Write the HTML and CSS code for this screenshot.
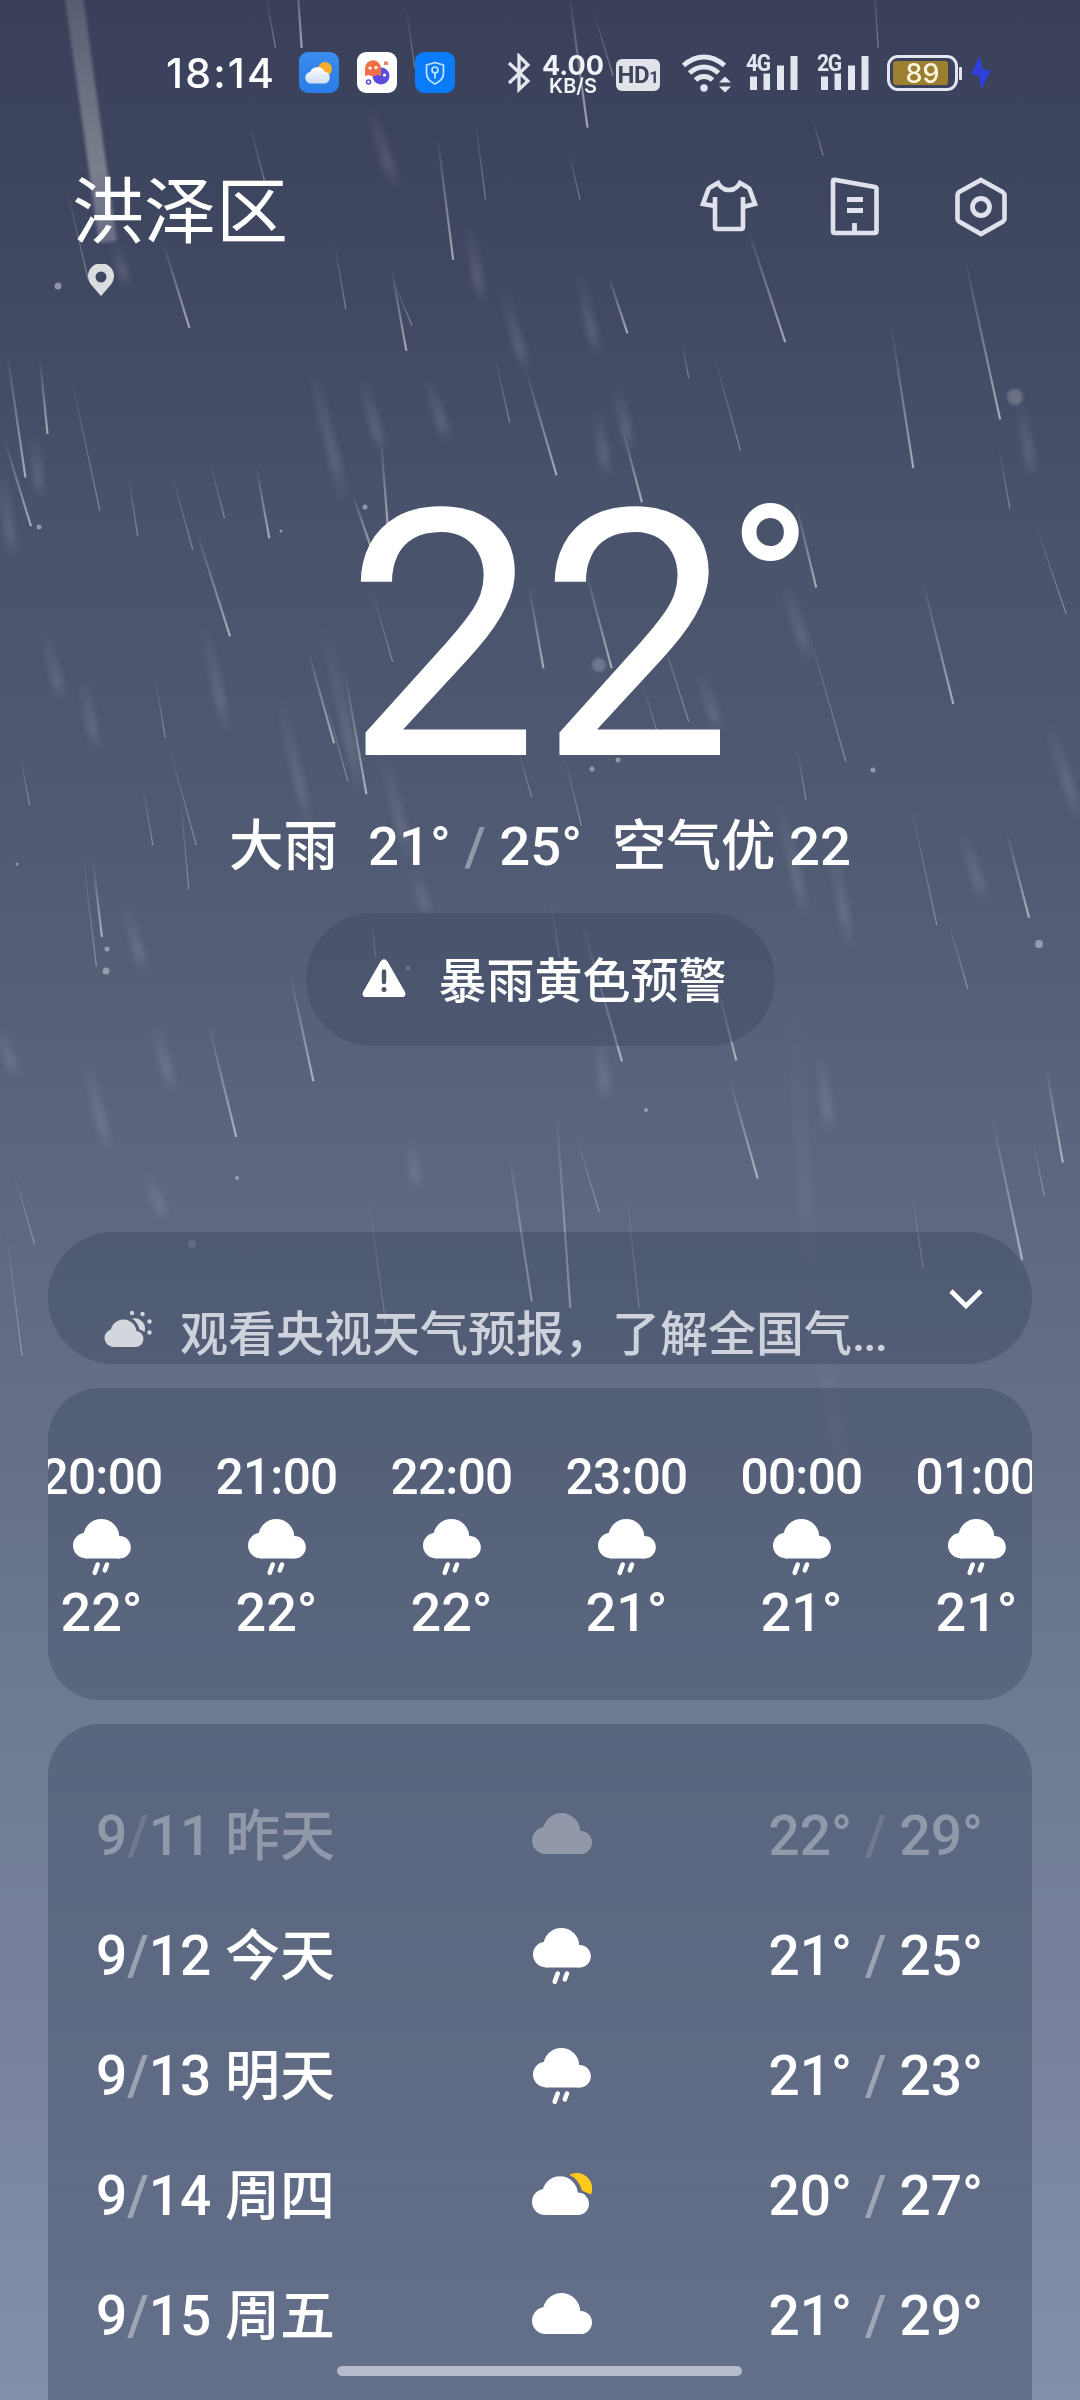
FILE: index.html
```html
<!DOCTYPE html>
<html lang="zh-CN">
<head>
<meta charset="utf-8">
<title>天气</title>
<link rel="stylesheet" href="styles.css">
</head>
<body>
<svg class="defs" width="0" height="0" aria-hidden="true">
  <defs>
    <linearGradient id="fade" x1="0" y1="0" x2="0" y2="1"><stop offset="0" stop-color="#dfe2e6" stop-opacity="0"/><stop offset="1" stop-color="#dfe2e6"/></linearGradient>
    <linearGradient id="mist" x1="0" y1="0" x2="0" y2="1"><stop offset="0" stop-color="#cdcfd8" stop-opacity="0"/><stop offset=".7" stop-color="#cdcfd8"/><stop offset="1" stop-color="#cdcfd8" stop-opacity="0"/></linearGradient>
    <linearGradient id="streak" x1="0" y1="0" x2="0" y2="1"><stop offset="0" stop-color="#a9b0b4" stop-opacity=".25"/><stop offset=".7" stop-color="#a9b0b4" stop-opacity=".55"/><stop offset="1" stop-color="#a9a9c0" stop-opacity=".4"/></linearGradient>
    <linearGradient id="skyIcon" x1="0" y1="0" x2="0" y2="1"><stop offset="0" stop-color="#3a8cf0"/><stop offset="1" stop-color="#2a7de6"/></linearGradient>
    <linearGradient id="cloudIcon" x1="0" y1="0" x2="0" y2="1"><stop offset="0" stop-color="#fff"/><stop offset="1" stop-color="#cfdcf0"/></linearGradient>
    <filter id="soft" x="-20%" width="140%"><feGaussianBlur stdDeviation="4"/></filter>
    <filter id="softer" x="-50%" width="200%"><feGaussianBlur stdDeviation="1.500"/></filter>
    <symbol id="cloud" viewBox="0 0 60 41"><circle cx="29.5" cy="18.7" r="18.7"/><circle cx="13.5" cy="27.5" r="13.5"/><circle cx="48.5" cy="29.5" r="11.5"/><path d="M13 24H49V41H13Z"/></symbol>
    <symbol id="rain" viewBox="0 0 58 58"><circle cx="28.3" cy="18" r="18"/><circle cx="12.8" cy="26.5" r="12.8"/><circle cx="46.5" cy="28.2" r="11.3"/><path d="M12 22H47V39.5H12Z"/><path d="M24.7 45.500L21.700 53.8M34 45.500L31.8 51.3" fill="none" stroke="#fff" stroke-width="4.6" stroke-linecap="round"/></symbol>
    <symbol id="partly" viewBox="0 0 60 44"><g fill="#fff"><circle cx="28" cy="23" r="17.8"/><circle cx="13" cy="31" r="13"/><circle cx="45.8" cy="32.8" r="11.2"/><path d="M13 26H46V44H13Z"/></g><path fill="#ffca1c" d="M37.3 3.8A15.5 15.5 0 0 1 59 23.5Q53 21.3 50 19.6Q47 8.5 37.3 3.8Z"/></symbol>
    <symbol id="bars" viewBox="0 0 52 36"><path d="M4 21.5h7V35H4zM17.500 18.500H24V35h-6.500zM31 10.500h7V35h-7zM44.500 1H51.500V35H44.500z"/></symbol>
  </defs>
</svg>

<svg class="rain" viewBox="0 0 1080 2400" aria-hidden="true">
  <path class="streak" d="M73 -10L108 242"/>
  <g transform="scale(.6888 .7974)">
    <g class="glow">
      <path d="M165 300L185 360"/>
      <path d="M535 130L575 235"/><path d="M680 280L700 382"/><path d="M450 450L500 630"/><path d="M525 470L555 570"/><path d="M620 470L650 555"/><path d="M730 360L765 470"/><path d="M840 340L868 450"/>
      <path d="M0 590L20 700"/><path d="M50 545L58 625"/><path d="M65 790L90 880"/><path d="M295 780L330 920"/><path d="M120 850L140 940"/><path d="M405 870L450 1040"/><path d="M470 780L525 1000"/><path d="M555 940L595 1080"/>
      <path d="M865 510L882 600"/><path d="M895 480L915 565"/><path d="M1480 500L1500 600"/><path d="M1140 730L1175 830"/><path d="M1015 840L1045 920"/><path d="M1130 1000L1170 1150"/><path d="M1205 1050L1235 1190"/>
      <path d="M1520 900L1568 1030"/><path d="M180 1130L210 1220"/><path d="M125 1330L158 1445"/><path d="M225 1280L250 1370"/><path d="M600 1090L622 1150"/><path d="M1395 1040L1430 1130"/><path d="M1190 1320L1205 1420"/><path d="M0 1290L22 1350"/><path d="M595 1430L605 1490"/><path d="M870 1300L880 1380"/><path d="M215 1470L238 1530"/>
    </g>
    <g class="veil"><path d="M1150 1230L1175 1600"/><path d="M1170 1580L1235 1890"/></g>
    <g class="bright">
      <path d="M430 -40L438 60"/><path d="M826 -10L853 160"/><path d="M635 170L658 326"/><path d="M237 305L275 411"/><path d="M568 335L590 440"/><path d="M762 460L808 596"/><path d="M1085 285L1140 429"/><path d="M1400 320L1452 526"/><path d="M1294 410L1326 587"/>
      <path d="M10 440L37 599"/><path d="M58 450L69 544"/><path d="M6 550L45 660"/><path d="M372 585L391 675"/><path d="M285 665L334 798"/><path d="M553 550L563 660"/><path d="M512 620L540 690"/><path d="M447 815L485 932"/><path d="M500 840L532 996"/><path d="M903 535L932 630"/><path d="M883 345L911 418"/>
      <path d="M1155 630L1185 737"/><path d="M1340 730L1384 883"/><path d="M850 715L888 838"/><path d="M768 735L789 838"/><path d="M421 1220L455 1356"/><path d="M303 1285L343 1426"/><path d="M844 1155L903 1331"/><path d="M1042 1240L1069 1330"/><path d="M1058 1350L1100 1478"/><path d="M1462 1045L1494 1151"/><path d="M1518 1335L1543 1458"/><path d="M1440 1400L1484 1580"/>
      <path d="M740 1450L772 1632"/><path d="M808 1395L828 1640"/><path d="M135 1080L148 1175"/>
    </g>
    <g class="thin">
      <path d="M860 10L890 95"/><path d="M362 155L385 230"/><path d="M590 10L602 85"/><path d="M690 150L705 250"/><path d="M485 300L502 388"/><path d="M100 460L145 640"/><path d="M826 190L842 250"/><path d="M570 350L598 408"/><path d="M990 430L1000 474"/><path d="M1180 150L1195 195"/><path d="M1268 -30L1275 60"/><path d="M1035 440L1075 565"/><path d="M718 445L740 530"/><path d="M185 590L200 672"/><path d="M248 590L280 690"/><path d="M305 580L326 650"/><path d="M225 850L240 925"/><path d="M245 935L285 1060"/><path d="M207 985L222 1060"/><path d="M262 1000L274 1115"/><path d="M120 1070L140 1212"/>
      <path d="M1450 560L1466 638"/><path d="M1170 780L1228 955"/><path d="M1500 650L1548 770"/><path d="M1158 940L1170 1003"/><path d="M950 770L1000 905"/><path d="M820 950L844 1035"/><path d="M1320 1000L1360 1160"/><path d="M1375 1150L1405 1240"/><path d="M540 1155L545 1200"/><path d="M800 1130L812 1200"/><path d="M1500 1430L1516 1500"/><path d="M1325 1500L1340 1590"/><path d="M835 1420L870 1520"/><path d="M535 1500L560 1660"/><path d="M910 1500L928 1640"/><path d="M8 1535L32 1700"/><path d="M20 1470L50 1560"/><path d="M95 230L128 350"/><path d="M30 950L43 1010"/><path d="M930 850L962 940"/>
      <path d="M470 870L505 980"/><path d="M540 740L570 830"/><path d="M752 940L772 1000"/><path d="M385 -10L400 60"/>
    </g>
  </g>
  <g class="spots"><circle cx="1015" cy="397" r="8" opacity=".5" filter="url(#softer)"/><circle cx="599" cy="665" r="7" opacity=".5" filter="url(#softer)"/><circle cx="1039" cy="944" r="4"/><circle cx="58" cy="286" r="3.500"/><circle cx="39" cy="527" r="2.500"/><circle cx="365" cy="507" r="2.500"/><circle cx="592" cy="769" r="2.500"/><circle cx="618" cy="760" r="2.500"/><circle cx="873" cy="770" r="2.500"/><circle cx="106" cy="971" r="3.500"/><circle cx="107" cy="949" r="2.500"/><circle cx="646" cy="1110" r="2"/><circle cx="237" cy="1178" r="2"/><circle cx="281" cy="531" r="1.500"/><circle cx="408" cy="968" r="2"/><circle cx="192" cy="1244" r="4" opacity=".4"/><circle cx="17" cy="864" r="1.500"/></g>
</svg>

<div class="screen">
  <header class="status">
    <span class="clock">18:14</span>
    <div class="apps">
      <svg width="40" height="41" viewBox="0 0 40 41"><rect width="40" height="41" rx="9" fill="url(#skyIcon)"/><circle cx="26" cy="17" r="7" fill="#f5ae2c"/><g fill="url(#cloudIcon)"><path d="M12 31.500A5.800 5.800 0 0 1 11 20A8 8 0 0 1 25.500 19.500A6.200 6.200 0 0 1 26.500 31.500Z"/></g></svg>
      <svg width="40" height="41" viewBox="0 0 40 41"><rect width="40" height="41" rx="9" fill="#fff"/><circle cx="24" cy="24" r="8.500" fill="#5b4be0"/><path d="M8 24V16.500A8 8 0 0 1 24 16V24L20 23L16 24.500L12 23Z" fill="#f07048"/><g fill="#fff"><circle cx="13" cy="16" r="1.600"/><circle cx="19" cy="15.500" r="1.600"/><circle cx="27.500" cy="23" r="1.600"/></g><path d="M27 9.500h4v3.500h-4z" fill="#e88468"/><circle cx="11.500" cy="30" r="2" fill="none" stroke="#5b4be0" stroke-width="1.500"/></svg>
      <svg width="40" height="41" viewBox="0 0 40 41"><rect width="40" height="41" rx="9" fill="#0a7cfa"/><g fill="none" stroke="#c4e4ff" stroke-width="1.700" stroke-linejoin="round"><path d="M20 10.500L28.500 13V21Q28.500 28 20 32Q11.500 28 11.500 21V13Z"/><circle cx="20" cy="18" r="3"/><path d="M20 21V26.500"/></g></svg>
    </div>
    <svg class="bt" width="26" height="40" viewBox="0 0 26 40"><path d="M3 10L22 28L13 36.500V3L22 12L3 30" fill="none" stroke="#e3e6ef" stroke-width="3.300"/></svg>
    <div class="speed"><b>4.00</b><i>KB/S</i></div>
    <div class="hd">HD<small>1</small></div>
    <svg class="wifi" width="52" height="40" viewBox="0 0 52 40"><g fill="none" stroke="#e3e6ef" stroke-width="5"><path d="M2.500 12.500Q12 4 23 4T43.500 12.500"/><path d="M8.500 20Q15 14 23 14T37.500 20"/><path d="M14.500 27Q18 23.500 23 23.500T31.500 27"/></g><g fill="#e3e6ef"><circle cx="23" cy="35" r="3.700"/><path d="M38 29.500L44 23.500L50 29.500ZM38 33.500H50L44 39.500Z"/></g></svg>
    <div class="signal"><svg viewBox="0 0 52 36"><use href="#bars"/></svg><span>4G</span></div>
    <div class="signal"><svg viewBox="0 0 52 36"><use href="#bars"/></svg><span>2G</span></div>
    <div class="battery"><span>89</span></div>
    <svg class="bolt" width="22" height="36" viewBox="0 0 22 36"><path d="M9.500 1L1 20H9L11 35L21 15H13L9.500 1Z" fill="#2f3fdc"/></svg>
  </header>

  <section class="place">
    <h1>洪泽区</h1>
    <nav class="tools">
      <svg width="60" height="60" viewBox="0 0 60 60"><path d="M16 28V50Q16 52 18 52H42Q44 52 44 50V20M16 20V32M16 29L4 27L9.500 12Q10 11 12 10L19 6Q21 10 25 12Q30 14 35 12Q39 10 41 6L48 10Q50 11 50.500 12L56 27L44 30"/></svg>
      <svg width="60" height="60" viewBox="0 0 60 60"><path d="M9.500 2.800L50 10Q51.500 10.500 51.500 12V54Q51.500 56 49.500 56H10Q8 56 8 54V4.500Q8 2.500 9.500 2.800Z"/><path d="M22 22.500H38M22 33.500H38M29.500 46V55" stroke-width="4.800"/></svg>
      <svg width="60" height="60" viewBox="0 0 60 60"><path d="M30 3L51.500 15Q53.500 16.500 53.500 18V42Q53.500 43.500 52 44.500L30 57L8 44.500Q6.500 43.500 6.500 42V18Q6.500 16.500 8 15Z"/><circle cx="30" cy="30" r="8.500" stroke-width="4.800"/></svg>
    </nav>
  </section>
  <svg class="pin" width="26" height="32" viewBox="0 0 26 32"><path fill-rule="evenodd" d="M13 32L3 20.500A13 13 0 1 1 23 20.500ZM13 7.500A5.500 5.500 0 1 0 13 18.500A5.500 5.500 0 1 0 13 7.500Z" fill="#dcdde0"/></svg>

  <div class="now">22<span>°</span></div>
  <div class="brief"><span>大雨</span><span class="range">21° <em>/</em> 25°</span><span>空气优 22</span></div>
  <div class="alert">
    <svg width="44" height="38" viewBox="0 0 44 38"><path d="M18.500 2.500Q22 -2 25.500 2.500L43 33Q44.500 38 40 38H4Q-.5 38 1 33Z" fill="#fff"/><path d="M22 12.500V23" stroke="#4c566e" stroke-width="4.400" stroke-linecap="round"/><circle cx="22" cy="30.500" r="2.500" fill="#4c566e"/></svg>
    <span>暴雨黄色预警</span>
  </div>

  <section class="card tip">
    <svg width="48" height="38" viewBox="0 0 48 38"><g fill="#d3d7dd"><circle cx="19.500" cy="22.500" r="13"/><circle cx="9.500" cy="28" r="9"/><circle cx="31.500" cy="29" r="8"/><path d="M9 24H32V37H9Z"/><path d="M28 8.500A10.500 10.500 0 0 1 40.500 22Q38 20 35.500 19.500Q33.500 12 28 8.500Z"/><circle cx="28" cy="3" r="2.200"/><circle cx="38.500" cy="4" r="2.200"/><circle cx="45.500" cy="11.500" r="2.200"/><circle cx="45.500" cy="22.500" r="2.200"/></g></svg>
    <p>观看央视天气预报，了解全国气<span>...</span></p>
    <svg class="chev" width="34" height="20" viewBox="0 0 34 20"><path d="M2 2L17 17L32 2" fill="none" stroke="#fff" stroke-width="4.600"/></svg>
  </section>

  <section class="card hourly">
    <div class="hours">
      <div><time>20:00</time><svg class="wx"><use href="#rain"/></svg><b>22°</b></div>
      <div><time>21:00</time><svg class="wx"><use href="#rain"/></svg><b>22°</b></div>
      <div><time>22:00</time><svg class="wx"><use href="#rain"/></svg><b>22°</b></div>
      <div><time>23:00</time><svg class="wx"><use href="#rain"/></svg><b>21°</b></div>
      <div><time>00:00</time><svg class="wx"><use href="#rain"/></svg><b>21°</b></div>
      <div><time>01:00</time><svg class="wx"><use href="#rain"/></svg><b>21°</b></div>
    </div>
  </section>

  <section class="card daily">
    <div class="day past"><span>9<em>/</em>11 昨天</span><svg class="dry"><use href="#cloud"/></svg><span class="hilo"><i>22°</i><em>/</em><i>29°</i></span></div>
    <div class="day"><span>9<em>/</em>12 今天</span><svg class="wx"><use href="#rain"/></svg><span class="hilo"><i>21°</i><em>/</em><i>25°</i></span></div>
    <div class="day"><span>9<em>/</em>13 明天</span><svg class="wx"><use href="#rain"/></svg><span class="hilo"><i>21°</i><em>/</em><i>23°</i></span></div>
    <div class="day"><span>9<em>/</em>14 周四</span><svg class="sun"><use href="#partly"/></svg><span class="hilo"><i>20°</i><em>/</em><i>27°</i></span></div>
    <div class="day"><span>9<em>/</em>15 周五</span><svg class="dry"><use href="#cloud"/></svg><span class="hilo"><i>21°</i><em>/</em><i>29°</i></span></div>
  </section>
</div>
<div class="homebar"></div>
</body>
</html>
```
FILE: styles.css
```css
* { box-sizing: border-box; margin: 0; padding: 0; }
body {
  position: relative;
  width: 1080px;
  height: 2400px;
  overflow: hidden;
  color: #fff;
  font-family: Roboto, "Noto Sans CJK SC", sans-serif;
  font-weight: 500;
  background: linear-gradient(#3a405a 0, #3e455e 200px, #48526a 500px, #505a72 850px, #5a647c 1100px, #646e87 1400px, #6e7992 1700px, #79839d 2050px, #838faa 2400px);
}
em, i { font-style: normal; }
em { opacity: .38; }
svg { display: block; flex: none; }
.defs { position: absolute; }

/* rain layer behind the content */
.rain { position: absolute; left: 0; top: 0; width: 1080px; height: 2400px; }
.rain path { stroke: url(#fade); vector-effect: non-scaling-stroke; fill: none; }
.rain .glow path, .rain .veil path { stroke: url(#mist); }
.rain .streak { stroke: url(#streak); stroke-width: 18px; filter: url(#softer); }
.glow { stroke-width: 11px; opacity: .15; filter: url(#soft); }
.veil { stroke-width: 16px; opacity: .05; filter: url(#soft); }
.bright { stroke-width: 2.2px; opacity: .62; }
.thin { stroke-width: 1.2px; opacity: .4; }
.spots { fill: #c3c6d0; opacity: .6; }

.screen { position: relative; height: 2400px; overflow: hidden; display: flex; flex-direction: column; }

/* status bar */
.status { display: flex; align-items: center; height: 145px; padding-left: 166px; color: #e3e6ef; flex: none; }
.clock { width: 133px; font: 500 41px/60px Inter, sans-serif; letter-spacing: 2.2px; color: #fff; }
.apps { display: flex; gap: 18px; width: 207px; }
.bt { width: 26px; margin-right: 10px; }
.speed { display: flex; flex-direction: column; align-items: center; width: 62px; margin: 3px 12px 0 0; color: #f2f3f7; font-family: Inter, sans-serif; }
.speed b { font-size: 27px; font-weight: 700; line-height: 23px; }
.speed i { font-size: 20px; font-weight: 600; line-height: 18px; }
.hd { width: 44px; height: 32px; margin: 4px 21px 0 0; border-radius: 6px; background: #e0e3ea; color: #3d445c; font: 700 24px/33px Roboto, sans-serif; text-align: center; letter-spacing: -.5px; }
.hd small { font-size: 17px; }
.wifi { width: 52px; margin-right: 13px; }
.signal { position: relative; width: 52px; height: 36px; margin-right: 19px; }
.signal svg { width: 52px; height: 36px; fill: #e3e6ef; }
.signal span { position: absolute; left: 0; top: -3px; font: 700 24px/22px Roboto, sans-serif; letter-spacing: -1.6px; transform: scaleX(.88); transform-origin: left; }
.battery { position: relative; width: 71px; height: 36px; padding: 3px; margin: 0 12px 0 -1px; border: 3px solid #e3e6ef; border-radius: 11px; }
.battery span { display: block; width: 55px; height: 24px; border-radius: 3px; background: #9c8030; color: #fff4e0; font: 500 27px/25px Inter, sans-serif; text-align: center; padding-left: 4px; }
.battery::after { content: ""; position: absolute; right: -7px; top: 9px; width: 3px; height: 13px; border-radius: 1px; background: #e3e6ef; }

/* place and tools */
.place { display: flex; justify-content: space-between; align-items: center; height: 124px; padding: 0 69px 0 72px; flex: none; }
h1 { font-size: 72px; font-weight: 400; line-height: 80px; padding-top: 12px; }
.tools { display: flex; gap: 66px; }
.tools svg { fill: none; stroke: #dfe2ec; stroke-width: 4.6; }
.pin { margin: -5px 0 0 88px; }

/* current conditions */
.now { display: flex; height: 345px; margin-top: 169px; padding-left: 345px; font-size: 345px; line-height: 345px; font-weight: 400; flex: none; }
.now span { margin-left: -5px; font-size: 222px; font-weight: 500; line-height: 246px; }
.brief { display: flex; justify-content: center; gap: 30px; height: 60px; margin-top: 6px; font-size: 54.500px; line-height: 60px; flex: none; }
.alert { display: flex; align-items: center; align-self: center; gap: 33px; width: 469px; height: 133px; margin: 37px 0 186px; padding-left: 56px; border-radius: 67px; background: rgba(62, 74, 98, .42); font-size: 48px; line-height: 60px; flex: none; }
.alert svg { margin-top: -3px; }
.alert span { margin-top: 5px; }

.card { width: 984px; margin: 0 auto 24px; border-radius: 52px; background: rgba(32, 45, 70, .245); flex: none; overflow: hidden; }

/* forecast tip */
.tip { display: flex; align-items: center; height: 132px; padding: 0 49px 0 56px; border-radius: 66px; }
.tip svg { margin-top: 62px; }
.tip p { margin: 73px auto 0 28px; font-size: 48px; line-height: 62px; color: #cdd2dc; white-space: nowrap; }
.tip p span { letter-spacing: -2px; }
.tip .chev { margin-top: 1px; }

/* hourly strip */
.hourly { height: 312px; }
.hours { display: flex; width: 1050px; margin-left: -34px; padding-top: 59px; }
.hours div { width: 175px; display: flex; flex-direction: column; align-items: center; }
.hours time { font-size: 49.500px; line-height: 60px; letter-spacing: -.7px; }
.hours b { font-size: 54px; font-weight: 500; line-height: 60px; margin-top: 6px; }
.wx { width: 58px; height: 58px; fill: #fff; }
.hours .wx { margin-top: 12px; }

/* daily list */
.daily { height: 700px; margin-bottom: 0; padding: 52px 49px 0 48px; border-radius: 52px 52px 0 0; background: linear-gradient(rgba(32, 45, 70, .27), rgba(32, 45, 70, .31)); }
.day { display: grid; grid-template-columns: 436px 60px 1fr; align-items: center; height: 120px; font-size: 55px; line-height: 120px; white-space: nowrap; }
.day .wx { margin: 1px 0 0 1px; }
.day .dry { width: 60px; height: 41px; margin-top: -6px; fill: #fff; }
.day .sun { width: 60px; height: 44px; margin-top: -7px; }
.hilo { display: flex; justify-content: flex-end; gap: 13px; }
.past > * { opacity: .33; }

.homebar { position: absolute; left: 337px; top: 2366px; width: 405px; height: 10px; border-radius: 5px; background: #b4bbcc; }
```
